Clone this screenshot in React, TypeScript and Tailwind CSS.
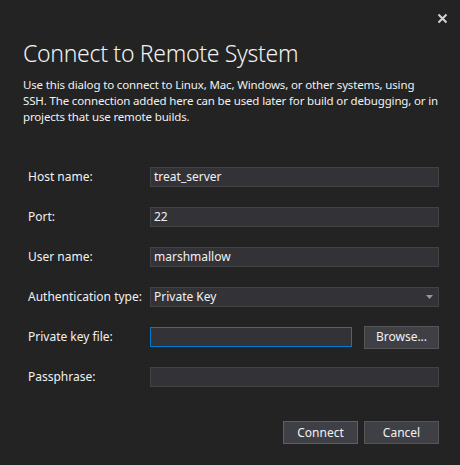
import React from "react";

const font = { fontFamily: '"Noto Sans", "Open Sans", sans-serif' };

const fields = [
  { label: "Host name:", value: "treat_server" },
  { label: "Port:", value: "22" },
  { label: "User name:", value: "marshmallow" },
];

const TextBox = ({ value, focused }: { value?: string; focused?: boolean }) => (
  <div
    className={`flex h-5 flex-1 items-center border bg-[#333337] pl-[3px] text-[12px] text-[#f1f1f1] ${
      focused ? "border-[#007acc]" : "border-[#434346]"
    }`}
  >
    {value}
  </div>
);

const Button = ({ children, primary }: { children: React.ReactNode; primary?: boolean }) => (
  <button
    className={`flex h-[23px] w-[75px] items-center justify-center border bg-[#3f3f46] text-[12px] text-[#f1f1f1] ${
      primary ? "border-[#007acc]" : "border-[#555555]"
    }`}
  >
    {children}
  </button>
);

export default function App() {
  return (
    <div className="flex h-[465px] w-[460px] flex-col bg-[#232323] text-[#f1f1f1]" style={font}>
      <div className="flex justify-end pr-[12px] pt-[13px]">
        <svg width="11" height="11" viewBox="0 0 11 11">
          <path d="M1.5 1.5 L9.5 9.5 M9.5 1.5 L1.5 9.5" stroke="#d4d4d4" strokeWidth="2" />
        </svg>
      </div>
      <div className="pl-[23px] pr-[10px]">
        <h1 className="mt-[13px] text-[23px] leading-8 font-light tracking-[-0.3px]">
          Connect to Remote System
        </h1>
        <p className="mt-2 text-[11.5px] leading-4 tracking-[-0.15px]">
          Use this dialog to connect to Linux, Mac, Windows, or other systems, using
          <br />
          SSH. The connection added here can be used later for build or debugging, or in
          <br />
          projects that use remote builds.
        </p>
      </div>
      <div className="mt-[42px] flex flex-col gap-5 pl-[28px] pr-[21px] text-[12px]">
        {fields.map((f) => (
          <div key={f.label} className="flex h-5 items-center">
            <span className="w-[122px]">{f.label}</span>
            <TextBox value={f.value} />
          </div>
        ))}
        <div className="flex h-5 items-center">
          <span className="w-[122px]">Authentication type:</span>
          <div className="flex h-5 flex-1 items-center justify-between border border-[#434346] bg-[#333337] pl-[3px] pr-[5px]">
            <span>Private Key</span>
            <svg width="7" height="4" viewBox="0 0 7 4">
              <path d="M0 0 H7 L3.5 4 Z" fill="#999999" />
            </svg>
          </div>
        </div>
        <div className="flex h-5 items-center">
          <span className="w-[122px]">Private key file:</span>
          <div className="flex flex-1 items-center gap-3">
            <TextBox focused />
            <Button>Browse...</Button>
          </div>
        </div>
        <div className="flex h-5 items-center">
          <span className="w-[122px]">Passphrase:</span>
          <TextBox />
        </div>
      </div>
      <div className="mt-[34px] flex justify-end gap-[6px] pr-[21px]">
        <Button primary>Connect</Button>
        <Button>Cancel</Button>
      </div>
    </div>
  );
}
